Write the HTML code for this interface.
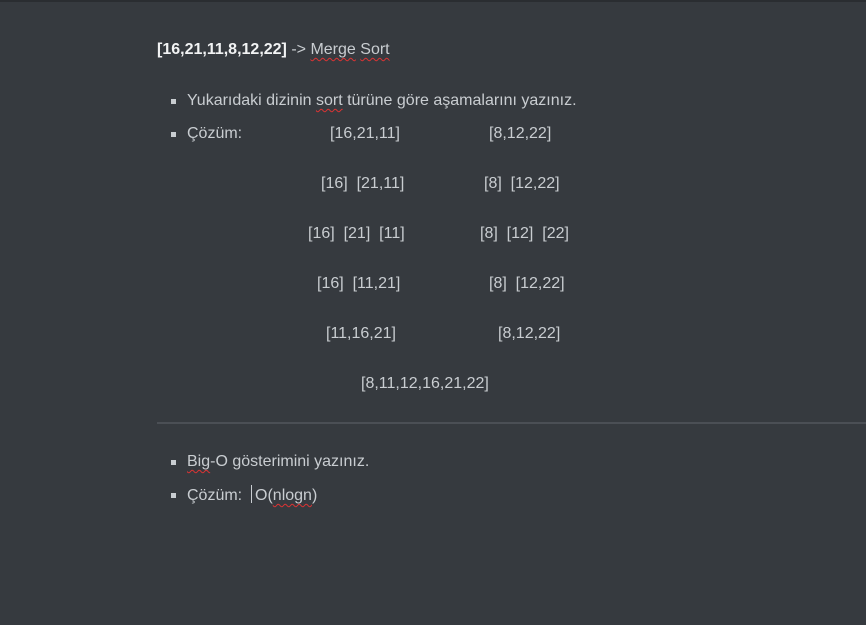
<!DOCTYPE html>
<html><head><meta charset="utf-8"><style>
html,body{margin:0;padding:0}
body{width:866px;height:625px;background:#363a3f;position:relative;overflow:hidden;font-family:"Liberation Sans",sans-serif;font-size:16px;color:#c9cdd1;border-top:2px solid #2a2d31;box-sizing:border-box}
.t{position:absolute;line-height:20px;white-space:pre}
.b{position:absolute;width:5px;height:5px;background:#c9cdd1}
.sq{text-decoration:underline wavy #d33;text-decoration-skip-ink:none;text-underline-offset:3px;text-decoration-thickness:1px}
hr{position:absolute;left:157px;top:420px;width:709px;margin:0;border:0;height:2px;background:#4b4f55}
</style></head><body>
<div class="t" style="left:157px;top:38px"><b style="color:#f2f3f4">[16,21,11,8,12,22]</b> -&gt; <span class="sq">Merge</span> <span class="sq">Sort</span></div>
<div class="b" style="left:171px;top:97px"></div>
<div class="t" style="left:187px;top:89px">Yukarıdaki dizinin <span class="sq">sort</span> türüne göre aşamalarını yazınız.</div>
<div class="b" style="left:171px;top:130px"></div>
<div class="t" style="left:187px;top:122px">Çözüm:</div>
<div class="t" style="left:330px;top:122px">[16,21,11]</div>
<div class="t" style="left:489px;top:122px">[8,12,22]</div>
<div class="t" style="left:321px;top:172px">[16]  [21,11]</div>
<div class="t" style="left:484px;top:172px">[8]  [12,22]</div>
<div class="t" style="left:308px;top:222px">[16]  [21]  [11]</div>
<div class="t" style="left:480px;top:222px">[8]  [12]  [22]</div>
<div class="t" style="left:317px;top:272px">[16]  [11,21]</div>
<div class="t" style="left:489px;top:272px">[8]  [12,22]</div>
<div class="t" style="left:326px;top:322px">[11,16,21]</div>
<div class="t" style="left:498px;top:322px">[8,12,22]</div>
<div class="t" style="left:361px;top:372px">[8,11,12,16,21,22]</div>
<hr>
<div class="b" style="left:171px;top:458px"></div>
<div class="t" style="left:187px;top:450px"><span class="sq">Big</span>-O gösterimini yazınız.</div>
<div class="b" style="left:171px;top:491px"></div>
<div class="t" style="left:187px;top:483px">Çözüm:  <span style="display:inline-block;width:1px;height:18px;background:#c9cdd1;vertical-align:-3px;margin-right:3px"></span>O(<span class="sq">nlogn</span>)</div>
</body></html>
